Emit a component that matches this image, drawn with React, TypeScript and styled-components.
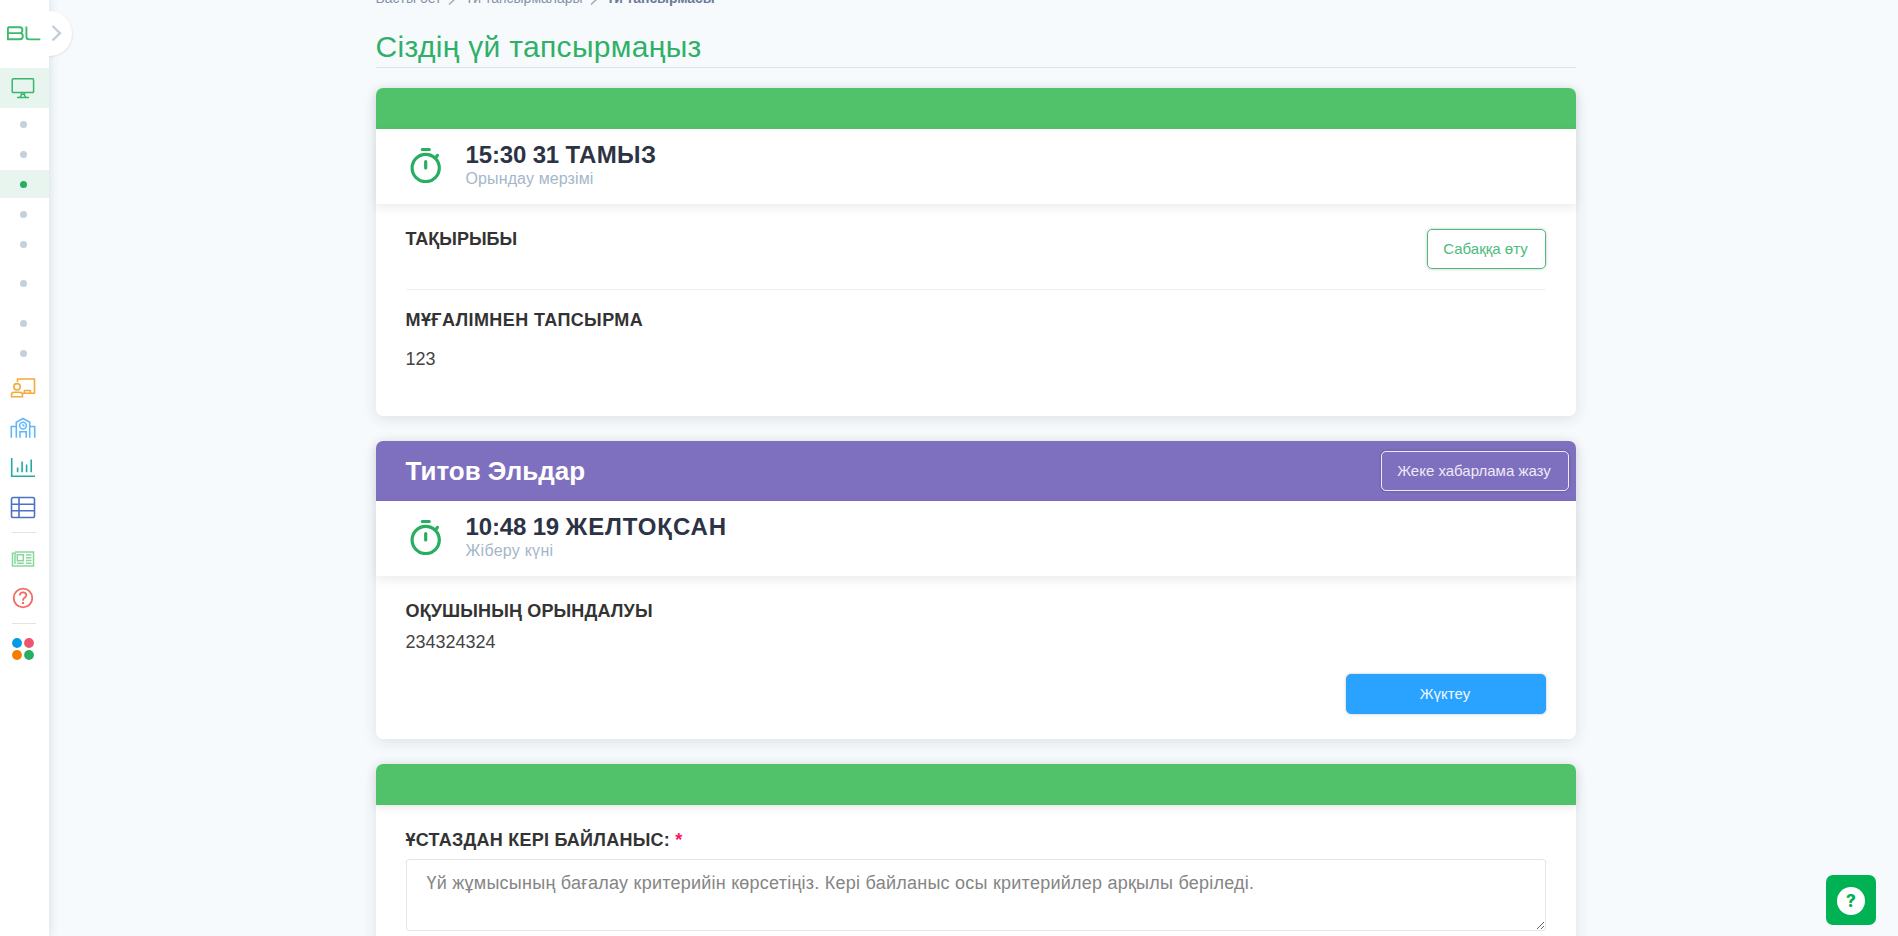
import React from "react";
import styled, { createGlobalStyle } from "styled-components";

const GlobalStyle = createGlobalStyle`
  * { box-sizing: border-box; }
  html, body { margin: 0; height: 100%; overflow: hidden; }
  body {
    background: #f6fafd;
    color: #333;
    font-family: "Liberation Sans", Arial, sans-serif;
  }
`;

const Page = styled.div`
  display: flex;
  height: 936px;
  overflow: hidden;
`;

const Sidebar = styled.aside`
  position: relative;
  z-index: 2;
  width: 49px;
  flex: none;
  background: #fff;
  box-shadow: 2px 0 8px rgba(60, 80, 100, 0.13);
`;

const Toggle = styled.button`
  position: absolute;
  top: 11px;
  left: 27px;
  width: 45px;
  height: 45px;
  padding: 0;
  border: 0;
  border-radius: 50%;
  background: #fff;
  box-shadow: 1px 1px 2px rgba(60, 80, 100, 0.09);
  clip-path: inset(-4px -6px -6px 22px);
`;

const Chevron = styled.svg`
  position: absolute;
  top: 25px;
  left: 51px;
`;

const Logo = styled.div`
  height: 68px;
  padding: 26px 0 0 7px;
  line-height: 0;
`;

const NavList = styled.nav`
  display: flex;
  flex-direction: column;
`;

const NavItem = styled.a<{ $h?: number; $active?: boolean }>`
  display: flex;
  align-items: center;
  justify-content: center;
  height: ${(p) => p.$h ?? 40}px;
  padding-right: 4px;
  background: ${(p) => (p.$active ? "#e8f5ee" : "transparent")};
`;

const DotItem = styled.a<{ $active?: boolean; $gap?: number }>`
  height: 28px;
  margin-top: ${(p) => p.$gap ?? 2}px;
  padding: 11px 0 0 20px;
  background: ${(p) => (p.$active ? "#e8f5ee" : "transparent")};

  &::before {
    content: "";
    display: block;
    width: 7px;
    height: 7px;
    border-radius: 50%;
    background: ${(p) => (p.$active ? "#27ae60" : "#c5d0dc")};
  }
`;

const NavRule = styled.div`
  width: 24px;
  height: 1px;
  margin-left: 12px;
  background: #dfe3ea;
`;

const Content = styled.main`
  width: 1200px;
  margin-left: 326.5px;
`;

const Breadcrumbs = styled.div`
  display: flex;
  align-items: center;
  height: 18px;
  margin-top: -11px;
  font-size: 14px;
  line-height: 18px;
  color: #8492a6;
  white-space: nowrap;

  svg { margin: 1px 8px 0 6px; }
  b { color: #6d7b98; letter-spacing: -0.1px; }
`;

const Title = styled.h1`
  height: 61px;
  margin: 0 0 20px;
  padding-top: 22px;
  border-bottom: 1px solid #dbe2e8;
  font-size: 30px;
  font-weight: 400;
  line-height: 36px;
  letter-spacing: 0.32px;
  color: #30b067;
`;

const Card = styled.section<{ $h: number }>`
  height: ${(p) => p.$h}px;
  margin-bottom: 25px;
  border-radius: 7px;
  background: #fff;
  box-shadow: 0 3px 14px rgba(40, 50, 60, 0.12);
`;

const CardHeader = styled.header<{ $color: string; $h?: number }>`
  display: flex;
  align-items: center;
  justify-content: space-between;
  height: ${(p) => p.$h ?? 41}px;
  padding: 0 7px 0 30px;
  border-radius: 7px 7px 0 0;
  background: ${(p) => p.$color};
  box-shadow: 0 2px 10px rgba(0, 0, 0, 0.1);
`;

const StudentName = styled.h2`
  margin: 0;
  font-size: 26px;
  line-height: 32px;
  color: #fff;
`;

const TimeRow = styled.div`
  display: flex;
  height: 75px;
  padding: 13px 0 0 34px;
  background: #fff;
  box-shadow: 0 4px 10px rgba(0, 0, 0, 0.08);
  position: relative;

  svg { margin: 5px 24px 0 0; flex: none; }
`;

const TimeText = styled.div`
  font-size: 24px;
  font-weight: 700;
  line-height: 26px;
  letter-spacing: -0.15px;
  color: #2c3345;
`;

const Month = styled.span<{ $spacing: number }>`
  letter-spacing: ${(p) => p.$spacing}px;
`;

const TimeLabel = styled.div<{ $spacing: number }>`
  margin-top: 1px;
  font-size: 16px;
  line-height: 20px;
  letter-spacing: ${(p) => p.$spacing}px;
  color: #a5b6c9;
`;

const CardBody = styled.div`
  padding: 0 30px;
`;

const TopicRow = styled.div`
  display: flex;
  justify-content: space-between;
  align-items: flex-start;
  height: 86px;
  padding-top: 24px;
  border-bottom: 1px solid #efefef;
`;

const Label = styled.h3<{ $spacing?: number; $top?: number }>`
  margin: ${(p) => p.$top ?? 0}px 0 0;
  font-size: 18px;
  line-height: 22px;
  letter-spacing: ${(p) => p.$spacing ?? 0}px;
  color: #333;

  em { color: #ff1463; font-style: normal; }
`;

const Answer = styled.p<{ $top: number }>`
  margin: ${(p) => p.$top}px 0 0;
  font-size: 18px;
  line-height: 22px;
  color: #444;
`;

const Button = styled.button<{ $w: number; $color: string; $fill?: string; $top?: number }>`
  flex: none;
  width: ${(p) => p.$w}px;
  height: 40px;
  margin-top: ${(p) => p.$top ?? 0}px;
  padding: 0 1px 2px 0;
  border: 1px solid ${(p) => p.$fill ?? p.$color};
  border-radius: 5px;
  background: ${(p) => p.$fill ?? "transparent"};
  box-shadow: 0 0 3px rgba(0, 0, 0, 0.26);
  font: 15px "Liberation Sans", Arial, sans-serif;
  color: ${(p) => p.$color};
`;

const Actions = styled.div`
  display: flex;
  justify-content: flex-end;
  margin-top: 21px;
`;

const Feedback = styled.textarea`
  display: block;
  width: 1140px;
  height: 72px;
  margin-top: 8px;
  padding: 11px 20px;
  border: 1px solid #e3e5e7;
  border-radius: 3px;
  background: #fff;
  font: 18px/24px "Liberation Sans", Arial, sans-serif;
  letter-spacing: 0.24px;

  &::placeholder { color: #858585; opacity: 1; }
`;

const HelpButton = styled.button`
  position: fixed;
  right: 22px;
  bottom: 11px;
  display: flex;
  align-items: center;
  justify-content: center;
  width: 50px;
  height: 50px;
  padding: 2px 0 0;
  border: 0;
  border-radius: 7px;
  background: #00b254;
`;

const HelpMark = styled.span`
  width: 28px;
  height: 28px;
  border-radius: 50%;
  background: #fff;
  color: #00b254;
  font: 800 17px/28px Inter, sans-serif;
  text-align: center;
`;

const Stopwatch = () => (
  <svg width="32" height="36" viewBox="0 0 32 36" fill="none" stroke="#27ae60" strokeWidth="3.2" strokeLinecap="round">
    <circle cx="15.7" cy="21" r="13.6" />
    <path d="M12.3 2.5h7M15.7 14.5v6.5M26.2 10.2l1.2-1.8" />
  </svg>
);

const CrumbArrow = () => (
  <svg width="10" height="14" viewBox="0 0 10 14" fill="none" stroke="#9aa8ba" strokeWidth="1.4">
    <path d="M2 1.5 8 7l-6 5.5" />
  </svg>
);

const MonitorIcon = () => (
  <svg width="24" height="22" viewBox="0 0 24 22" fill="none" stroke="#37b76c" strokeWidth="1.5">
    <rect x="1.2" y="1.8" width="21.4" height="13.8" rx="1.2" />
    <path d="M10.4 15.8v2.3L9 20.3M13.4 15.8v2.3l1.4 2.2M6 20.5h12M10.4 17.3h3" />
  </svg>
);

const BoardIcon = () => (
  <svg width="26" height="22" viewBox="0 0 26 22" fill="none" stroke="#f5a93b" strokeWidth="1.6" strokeLinejoin="round">
    <path d="M7.5 5V2h17v14.3H13" />
    <circle cx="7" cy="9.8" r="3.2" />
    <path d="M1.5 19.8v-2q0-2.6 2.6-2.6h5.8q2.6 0 2.6 2.6v2zM14.4 16v-2.5h6V16" />
  </svg>
);

const SchoolIcon = () => (
  <svg width="26" height="22" viewBox="0 0 26 22" fill="none" stroke="#62b6f8" strokeWidth="1.6">
    <path d="M1.3 20.8V9.5h5M24.7 20.8V9.5h-5M6.3 20.8V5.2L13 1.5l6.7 3.7v15.6M10 20.8v-6h6.2v6" />
    <circle cx="13" cy="8.6" r="3.4" />
    <path d="M13 7v1.8h1.6" strokeWidth="1.2" />
  </svg>
);

const ChartIcon = () => (
  <svg width="26" height="22" viewBox="0 0 26 22" fill="none" stroke="#22aaa8" strokeWidth="1.6">
    <path d="M1.7 1v18.2H25M7.6 10.5v4.8M12.1 4.5v10.8M16.6 7.5v7.8M21.2 2.5v12.8" />
  </svg>
);

const TableIcon = () => (
  <svg width="26" height="24" viewBox="0 0 26 24" fill="none" stroke="#4d72c4" strokeWidth="1.6">
    <rect x="1.5" y="1.5" width="23" height="20" rx="1.8" />
    <path d="M1.5 8.2h23M1.5 14.7h23M9 1.5v20" />
  </svg>
);

const NewsIcon = () => (
  <svg width="24" height="18" viewBox="0 0 24 18" fill="none" stroke="#86d79b" strokeWidth="1.5">
    <path d="M4 2h18.5v14H1.5V3.3H4V14" />
    <rect x="6.3" y="4.7" width="6" height="6" />
    <path d="M15 5h5.5M15 7.8h5.5M15 10.5h5.5M15 13.2h5.5M6 13.2h6.8" />
  </svg>
);

const QuestionIcon = () => (
  <svg width="22" height="22" viewBox="0 0 22 22" fill="none" stroke="#f26a60" strokeWidth="1.8">
    <circle cx="11" cy="11" r="9.3" />
    <path d="M7.8 8.5q.2-3.2 3.3-3.2t3.2 2.9q0 1.4-1.8 2.6-1.5 1-1.5 2.9" />
    <path d="M11 15v2" strokeWidth="2" />
  </svg>
);

const AppsIcon = () => (
  <svg width="22" height="22" viewBox="0 0 22 22">
    <circle cx="5" cy="5" r="4.9" fill="#039be5" />
    <circle cx="17" cy="5" r="4.9" fill="#ec5470" />
    <circle cx="5" cy="17" r="4.9" fill="#f57c00" />
    <circle cx="17" cy="17" r="4.9" fill="#27ae60" />
  </svg>
);

export default function App() {
  return (
    <>
      <GlobalStyle />
      <Page>
        <Sidebar>
          <Toggle aria-label="menu" />
          <Chevron width="12" height="17" viewBox="0 0 12 17" fill="none" stroke="#c3cedb" strokeWidth="2.4">
            <path d="M1.5 1 9 8.2l-7.5 7.3" />
          </Chevron>
          <Logo>
            <svg width="34" height="15" viewBox="0 0 34 15" fill="none" stroke="#3dba70" strokeWidth="1.9">
              <path d="M.9 1.3H13q2.4 0 2.4 2.8T13 7.1H.9M13 7.1q2.8 0 2.8 3.1T13 13.3H.9v-12M19.4.5v10q0 2.9 2.9 2.9h11" />
            </svg>
          </Logo>
          <NavList>
            <NavItem $active><MonitorIcon /></NavItem>
            <DotItem />
            <DotItem />
            <DotItem $active />
            <DotItem />
            <DotItem />
            <DotItem $gap={11} />
            <DotItem $gap={12} />
            <DotItem />
            <NavItem $h={41}><BoardIcon /></NavItem>
            <NavItem><SchoolIcon /></NavItem>
            <NavItem><ChartIcon /></NavItem>
            <NavItem><TableIcon /></NavItem>
            <NavItem $h={4} />
            <NavRule />
            <NavItem $h={52}><NewsIcon /></NavItem>
            <NavItem $h={26}><QuestionIcon /></NavItem>
            <NavItem $h={12} />
            <NavRule />
            <NavItem $h={50}><AppsIcon /></NavItem>
          </NavList>
        </Sidebar>
        <Content>
          <Breadcrumbs>
            Басты бет<CrumbArrow />Үй тапсырмалары<CrumbArrow /><b>Үй тапсырмасы</b>
          </Breadcrumbs>
          <Title>Сіздің үй тапсырмаңыз</Title>

          <Card $h={328}>
            <CardHeader $color="#51c269" />
            <TimeRow>
              <Stopwatch />
              <div>
                <TimeText>15:30 31 <Month $spacing={0.35}>ТАМЫЗ</Month></TimeText>
                <TimeLabel $spacing={0.12}>Орындау мерзімі</TimeLabel>
              </div>
            </TimeRow>
            <CardBody>
              <TopicRow>
                <Label>ТАҚЫРЫБЫ</Label>
                <Button $w={119} $top={1} $color="#4dbb7c">Сабаққа өту</Button>
              </TopicRow>
              <Label $top={19} $spacing={0.4}>МҰҒАЛІМНЕН ТАПСЫРМА</Label>
              <Answer $top={17}>123</Answer>
            </CardBody>
          </Card>

          <Card $h={298}>
            <CardHeader $color="#7f6fbf" $h={60}>
              <StudentName>Титов Эльдар</StudentName>
              <Button $w={188} $color="#eeeaf8">Жеке хабарлама жазу</Button>
            </CardHeader>
            <TimeRow>
              <Stopwatch />
              <div>
                <TimeText>10:48 19 <Month $spacing={0.9}>ЖЕЛТОҚСАН</Month></TimeText>
                <TimeLabel $spacing={0.28}>Жіберу күні</TimeLabel>
              </div>
            </TimeRow>
            <CardBody>
              <Label $top={24} $spacing={0.14}>ОҚУШЫНЫҢ ОРЫНДАЛУЫ</Label>
              <Answer $top={9}>234324324</Answer>
              <Actions>
                <Button $w={200} $color="#eef7ff" $fill="#29a3ff">Жүктеу</Button>
              </Actions>
            </CardBody>
          </Card>

          <Card $h={300}>
            <CardHeader $color="#51c269" />
            <CardBody>
              <Label $top={24} $spacing={0.24}>ҰСТАЗДАН КЕРІ БАЙЛАНЫС: <em>*</em></Label>
              <Feedback placeholder="Үй жұмысының бағалау критерийін көрсетіңіз. Кері байланыс осы критерийлер арқылы беріледі." />
            </CardBody>
          </Card>
        </Content>
      </Page>
      <HelpButton aria-label="help">
        <HelpMark>?</HelpMark>
      </HelpButton>
    </>
  );
}
